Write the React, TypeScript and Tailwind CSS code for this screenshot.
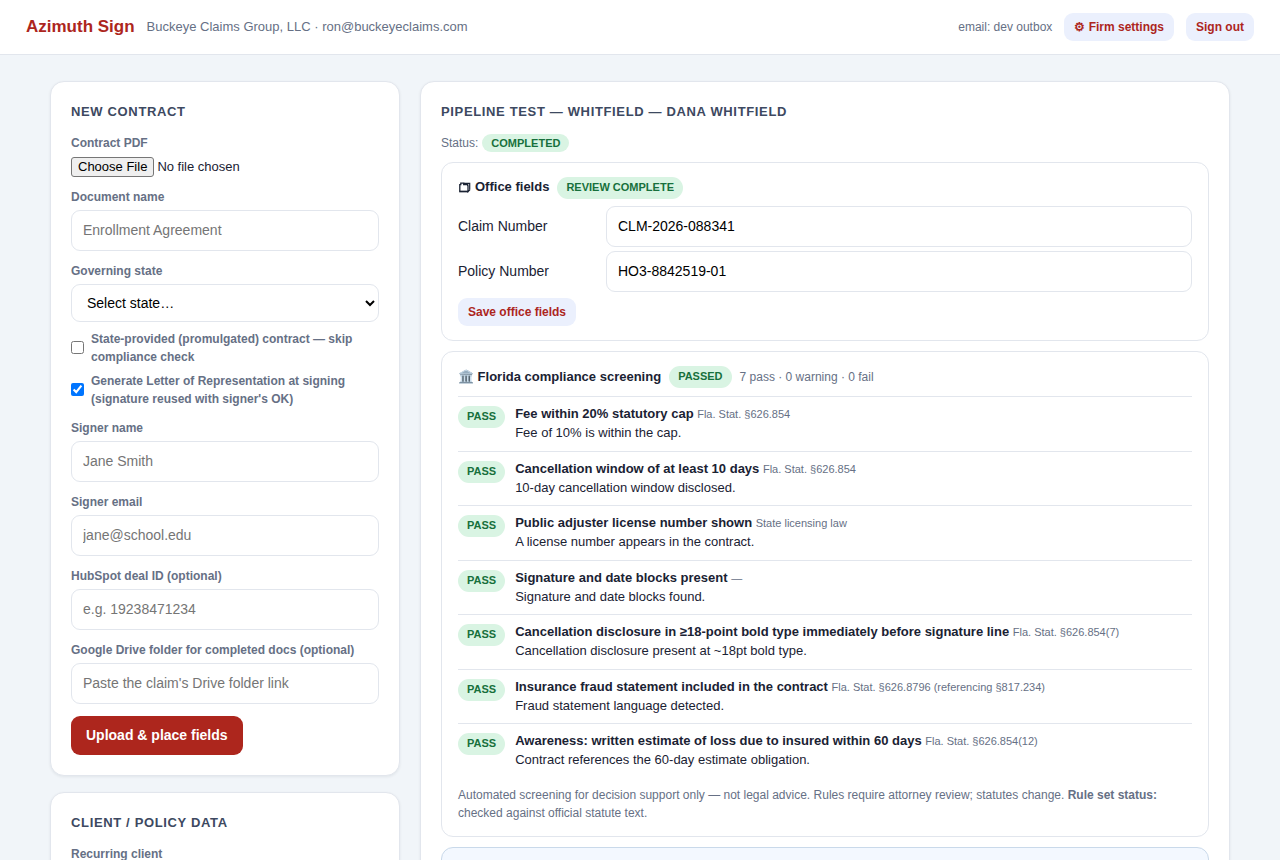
import React, { useState } from 'react';

const screeningRules = [
  { title: 'Fee within 20% statutory cap', cite: 'Fla. Stat. §626.854', note: 'Fee of 10% is within the cap.' },
  { title: 'Cancellation window of at least 10 days', cite: 'Fla. Stat. §626.854', note: '10-day cancellation window disclosed.' },
  { title: 'Public adjuster license number shown', cite: 'State licensing law', note: 'A license number appears in the contract.' },
  { title: 'Signature and date blocks present', cite: '—', note: 'Signature and date blocks found.' },
  {
    title: 'Cancellation disclosure in ≥18-point bold type immediately before signature line',
    cite: 'Fla. Stat. §626.854(7)',
    note: 'Cancellation disclosure present at ~18pt bold type.'
  },
  {
    title: 'Insurance fraud statement included in the contract',
    cite: 'Fla. Stat. §626.8796 (referencing §817.234)',
    note: 'Fraud statement language detected.'
  },
  {
    title: 'Awareness: written estimate of loss due to insured within 60 days',
    cite: 'Fla. Stat. §626.854(12)',
    note: 'Contract references the 60-day estimate obligation.'
  }
];

const labelClass = 'mb-1 block text-xs leading-[18px] font-bold text-[#667085]';

const inputClass =
  'block w-full min-w-0 rounded-[9px] border border-[#e2e6ed] bg-white px-[11px] pt-[11px] pb-3 text-sm leading-4 text-black placeholder:text-[#757575]';

const selectClass =
  'block h-[38px] w-full rounded-[9px] border border-[#e2e6ed] bg-white px-[11px] text-sm text-black';

const Card: React.FC<{ title: string; children: React.ReactNode }> = ({ title, children }) => (
  <section className="rounded-[14px] border border-[#e2e6ed] bg-white p-5 shadow-[0_1px_3px_rgba(16,24,40,0.07)]">
    <h2 className="mb-3 text-[13px] leading-5 font-bold tracking-wider uppercase text-[#3d4961]">{title}</h2>
    {children}
  </section>
);

const Panel: React.FC<{ children: React.ReactNode }> = ({ children }) => (
  <div className="mt-2.5 rounded-xl border border-[#e2e6ed] px-4 py-3.5">{children}</div>
);

const Badge: React.FC<{ children: React.ReactNode }> = ({ children }) => (
  <span className="shrink-0 rounded-full bg-[#d9f4e3] px-[9px] pt-px pb-[3px] text-[11px] leading-[18px] font-bold text-[#17703c]">
    {children}
  </span>
);

const SmallButton: React.FC<{ children: React.ReactNode }> = ({ children }) => (
  <button type="button" className="h-7 rounded-[9px] bg-[#ebf0fd] px-2.5 text-xs font-bold text-[#ad261d]">
    {children}
  </button>
);

const FolderIcon: React.FC = () => (
  <svg viewBox="0 0 13 11" className="h-[11px] w-[13px]" fill="none" stroke="currentColor" aria-hidden="true">
    <path d="M1.8 9.4V2.6h1V1.2h2.9v1.4h4V4" strokeWidth="1.3" />
    <path d="M1.2 9.5h9.2" strokeWidth="1.7" />
    <path d="M5.8 1.3h5.9v6.5" strokeWidth="1.2" />
    <path d="M10 3.4v6.1l1.9-1.7" strokeWidth="1.3" />
  </svg>
);

const Field: React.FC<{ id: string; label: string; placeholder: string; type?: string }> = ({
  id,
  label,
  placeholder,
  type = 'text'
}) => (
  <div className="mt-[11px]">
    <label htmlFor={id} className={labelClass}>
      {label}
    </label>
    <input id={id} type={type} placeholder={placeholder} className={inputClass} />
  </div>
);

const CheckRow: React.FC<{ label: string; checked: boolean; onChange: (value: boolean) => void }> = ({
  label,
  checked,
  onChange
}) => (
  <label className="flex items-center gap-[7px] text-xs leading-[18px] font-bold text-[#667085]">
    <input
      type="checkbox"
      checked={checked}
      onChange={(e) => onChange(e.target.checked)}
      className="mb-px size-[13px] shrink-0"
    />
    <span>{label}</span>
  </label>
);

const OfficeField: React.FC<{ id: string; label: string; value: string }> = ({ id, label, value }) => (
  <div className="mb-1 flex items-center gap-2">
    <label htmlFor={id} className="w-[140px] shrink-0 pb-px text-sm">
      {label}
    </label>
    <input id={id} defaultValue={value} className={inputClass} />
  </div>
);

const NewContract: React.FC = () => {
  const [promulgated, setPromulgated] = useState(false);
  const [letter, setLetter] = useState(true);

  return (
    <Card title="New contract">
      <label htmlFor="pdf" className={labelClass}>
        Contract PDF
      </label>
      <input
        id="pdf"
        type="file"
        className="mt-[5px] block h-5 w-full text-[13px] leading-4 file:mr-[3px] file:h-5 file:rounded-[3px] file:border file:border-solid file:border-[#767676] file:bg-[#efefef] file:px-1.5 file:text-black"
      />
      <Field id="docname" label="Document name" placeholder="Enrollment Agreement" />
      <div className="mt-[11px] mb-2">
        <label htmlFor="state" className={labelClass}>
          Governing state
        </label>
        <select id="state" className={selectClass}>
          <option>Select state…</option>
        </select>
      </div>
      <div className="space-y-1.5">
        <CheckRow
          label="State-provided (promulgated) contract — skip compliance check"
          checked={promulgated}
          onChange={setPromulgated}
        />
        <CheckRow
          label="Generate Letter of Representation at signing (signature reused with signer's OK)"
          checked={letter}
          onChange={setLetter}
        />
      </div>
      <Field id="signer" label="Signer name" placeholder="Jane Smith" />
      <Field id="email" label="Signer email" placeholder="jane@school.edu" type="email" />
      <Field id="deal" label="HubSpot deal ID (optional)" placeholder="e.g. 19238471234" />
      <Field
        id="drive"
        label="Google Drive folder for completed docs (optional)"
        placeholder="Paste the claim's Drive folder link"
      />
      <button
        type="button"
        className="mt-3 block rounded-[9px] bg-[#ad261d] px-[15px] pt-[11px] pb-3 text-sm leading-4 font-bold text-white"
      >
        Upload &amp; place fields
      </button>
    </Card>
  );
};

export default function App() {
  return (
    <div className="min-h-screen bg-[#f1f5f9] font-['Liberation_Sans',Arial,sans-serif] text-sm text-[#1a2233]">
      <header className="flex items-center gap-3 border-b border-[#e2e6ed] bg-white px-[26px] py-[13px]">
        <h1 className="text-[17px] leading-7 font-bold text-[#ad261d]">Azimuth Sign</h1>
        <span className="text-[13px] text-[#667085]">Buckeye Claims Group, LLC · ron@buckeyeclaims.com</span>
        <div className="ml-auto flex items-center gap-3">
          <span className="text-xs text-[#667085]">email: dev outbox</span>
          <SmallButton>⚙ Firm settings</SmallButton>
          <SmallButton>Sign out</SmallButton>
        </div>
      </header>

      <main className="mx-auto grid max-w-[1232px] grid-cols-[350px_minmax(0,1fr)] items-start gap-5 p-[26px]">
        <div className="space-y-4">
          <NewContract />
          <Card title="Client / policy data">
            <label htmlFor="client" className={labelClass}>
              Recurring client
            </label>
            <select id="client" className={selectClass} />
          </Card>
        </div>

        <Card title="Pipeline test — Whitfield — Dana Whitfield">
          <div className="flex h-[18px] items-center gap-1 text-xs text-[#667085]">
            Status:
            <span className="rounded-full bg-[#d9f4e3] px-[9px] text-[11px] leading-[18px] font-bold text-[#17703c]">
              COMPLETED
            </span>
          </div>

          <Panel>
            <div className="mb-[7px] flex items-center gap-2">
              <h3 className="flex items-center gap-1 pb-px text-[13px] font-bold">
                <FolderIcon />
                Office fields
              </h3>
              <Badge>REVIEW COMPLETE</Badge>
            </div>
            <OfficeField id="claim" label="Claim Number" value="CLM-2026-088341" />
            <OfficeField id="policy" label="Policy Number" value="HO3-8842519-01" />
            <div className="mt-1.5 flex">
              <SmallButton>Save office fields</SmallButton>
            </div>
          </Panel>

          <Panel>
            <div className="mb-2 flex items-center gap-2">
              <h3 className="text-[13px] font-bold">🏛️ Florida compliance screening</h3>
              <Badge>PASSED</Badge>
              <span className="text-xs text-[#667085]">7 pass · 0 warning · 0 fail</span>
            </div>
            <ul>
              {screeningRules.map((rule) => (
                <li
                  key={rule.title}
                  className="flex items-start gap-2.5 border-t border-[#e2e6ed] py-2 odd:pb-[9px]"
                >
                  <div className="flex pt-px">
                    <Badge>PASS</Badge>
                  </div>
                  <div className="text-[13px]">
                    <p className="leading-[18px]">
                      <b>{rule.title}</b> <span className="text-[11px] text-[#667085]">{rule.cite}</span>
                    </p>
                    <p className="leading-[19px]">{rule.note}</p>
                  </div>
                </li>
              ))}
            </ul>
            <p className="mt-2 text-xs leading-[18px] text-[#667085]">
              Automated screening for decision support only — not legal advice. Rules require attorney review; statutes
              change. <b>Rule set status:</b> checked against official statute text.
            </p>
          </Panel>

          <div className="mt-2.5 h-24 rounded-xl border border-[#c9d9ea] bg-[#f3f8ff]" />
        </Card>
      </main>
    </div>
  );
}
